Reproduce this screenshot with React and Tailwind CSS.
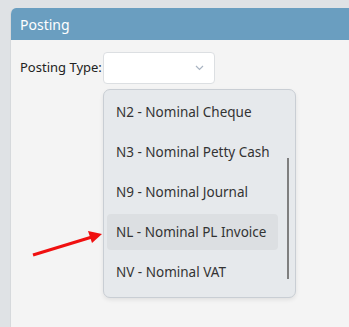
import React from 'react';

const options = [
  'N2 - Nominal Cheque',
  'N3 - Nominal Petty Cash',
  'N9 - Nominal Journal',
  'NL - Nominal PL Invoice',
  'NV - Nominal VAT',
];

const App = () => {
  return (
    <div
      className="relative w-[349px] h-[327px] overflow-hidden bg-[#dfe2e5] pt-2 pl-[10px]"
      style={{ fontFamily: '"Noto Sans", "Open Sans", sans-serif' }}
    >
      <div className="h-full rounded-tl-[6px] overflow-hidden bg-[#f4f4f4] border-l border-[#d6d9dc]">
        {/* header */}
        <div className="h-8 bg-[#6a9ec0] pl-[9px] flex items-center text-[14px] text-white">
          Posting
        </div>

        {/* body */}
        <div className="pl-[9px] pt-3">
          <div className="flex items-center">
            <span className="text-[13px] text-[#222] w-[83px]">Posting Type:</span>
            <div className="w-[112px] h-8 bg-white border border-[#dcdfe2] rounded-[4px] flex items-center justify-end pr-[10px]">
              <svg width="9" height="6" viewBox="0 0 9 6">
                <path d="M1 1l3.5 3.5L8 1" fill="none" stroke="#a9b4c2" strokeWidth="1.2" />
              </svg>
            </div>
          </div>

          {/* dropdown list */}
          <div className="ml-[83px] mt-[5px] w-[193px] h-[209px] relative bg-[#e6e9ec] border border-[#c9ced4] rounded-[7px] shadow-[0_2px_4px_rgba(0,0,0,0.08)] pt-[2px] px-[3px]">
            {options.map((o, i) => (
              <div key={o} className="h-10 py-[2px] pr-[14px]">
                <div
                  className={`h-9 rounded-[4px] pl-[9px] flex items-center text-[13.5px] text-[#333] ${
                    i === 3 ? 'bg-[#dcdfe2]' : ''
                  }`}
                >
                  {o}
                </div>
              </div>
            ))}
            <div className="absolute right-[6px] top-[68px] w-[2px] h-[121px] bg-[#7f7f7f]" />
          </div>
        </div>
      </div>

      {/* red annotation arrow */}
      <svg className="absolute left-0 top-0" width="349" height="327">
        <line x1="33" y1="255" x2="92" y2="237" stroke="#f01010" strokeWidth="3" />
        <polygon points="102,234 88,231 92,243" fill="#f01010" />
      </svg>
    </div>
  );
};

export default App;
